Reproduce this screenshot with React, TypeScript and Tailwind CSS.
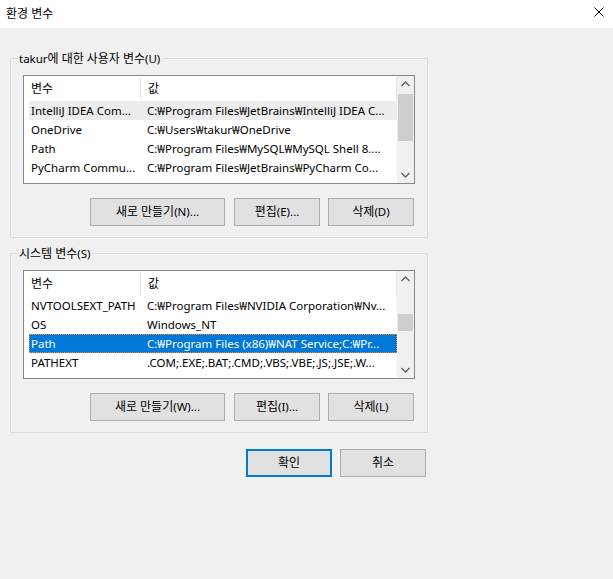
import React from "react";

type Row = { name: string; value: string; state?: "hover" | "selected" };

const userRows: Row[] = [
  { name: "IntelliJ IDEA Com...", value: "C:₩Program Files₩JetBrains₩IntelliJ IDEA C...", state: "hover" },
  { name: "OneDrive", value: "C:₩Users₩takur₩OneDrive" },
  { name: "Path", value: "C:₩Program Files₩MySQL₩MySQL Shell 8...." },
  { name: "PyCharm Commu...", value: "C:₩Program Files₩JetBrains₩PyCharm Co..." },
];

const systemRows: Row[] = [
  { name: "NVTOOLSEXT_PATH", value: "C:₩Program Files₩NVIDIA Corporation₩Nv..." },
  { name: "OS", value: "Windows_NT" },
  { name: "Path", value: "C:₩Program Files (x86)₩NAT Service;C:₩Pr...", state: "selected" },
  { name: "PATHEXT", value: ".COM;.EXE;.BAT;.CMD;.VBS;.VBE;.JS;.JSE;.W..." },
];

function T({ s }: { s: string }) {
  const parts = s.split(/([\uAC00-\uD7A3\u3131-\u318E]+)/);
  return (
    <>
      {parts.map((p, i) =>
        /[\uAC00-\uD7A3\u3131-\u318E]/.test(p) ? (
          <span key={i} className="text-[12px]">
            {p}
          </span>
        ) : (
          <React.Fragment key={i}>{p}</React.Fragment>
        )
      )}
    </>
  );
}

function Chevron({ dir }: { dir: "up" | "down" }) {
  return (
    <svg width="17" height="17" viewBox="0 0 17 17" className="block shrink-0">
      <path
        d={dir === "up" ? "M4.5 10 L8.5 6 L12.5 10" : "M4.5 7 L8.5 11 L12.5 7"}
        fill="none"
        stroke="#606060"
        strokeWidth="1.4"
      />
    </svg>
  );
}

function RowView({ row }: { row: Row }) {
  const base = "ml-[5px] flex h-[19px] shrink-0";
  const cls =
    row.state === "selected"
      ? base + " bg-[#0078d7] text-white outline outline-1 outline-dotted outline-[#ff8728] -outline-offset-1"
      : row.state === "hover"
      ? base + " bg-[#ececec] text-black"
      : base + " text-black";
  return (
    <div className={cls}>
      <div className="w-[111px] shrink-0 pl-[2px] overflow-hidden whitespace-nowrap leading-[19px]">{row.name}</div>
      <div className="flex-1 pl-[7px] overflow-hidden whitespace-nowrap leading-[19px]">{row.value}</div>
    </div>
  );
}

function ListView({ rows, thumbTop, thumbHeight }: { rows: Row[]; thumbTop: number; thumbHeight: number }) {
  return (
    <div className="flex w-[392px] h-[109px] border border-[#828790] bg-white">
      <div className="flex-1 flex flex-col overflow-hidden">
        <div className="flex h-[25px] shrink-0">
          <div className="w-[117px] shrink-0 pl-[7px] flex items-center">
            <span className="flex-1 text-[12px]">변수</span>
            <span className="w-px h-[23px] bg-[#e5e5e5]" />
          </div>
          <div className="flex-1 pl-[7px] flex items-center">
            <span className="flex-1 text-[12px]">값</span>
            <span className="w-px h-[23px] bg-[#e5e5e5]" />
          </div>
        </div>
        {rows.map((r, i) => (
          <RowView key={i} row={r} />
        ))}
      </div>
      <div className="w-[17px] shrink-0 flex flex-col bg-[#f0f0f0]">
        <Chevron dir="up" />
        <div className="flex-1 flex flex-col">
          <div className="mx-[1px] bg-[#cdcdcd]" style={{ marginTop: thumbTop, height: thumbHeight }} />
        </div>
        <Chevron dir="down" />
      </div>
    </div>
  );
}

function Btn({ label, w, primary }: { label: string; w: string; primary?: boolean }) {
  const cls = primary
    ? "h-[28px] border-2 border-[#0078d7] bg-[#e1e1e1] flex items-center justify-center text-black whitespace-nowrap " + w
    : "h-[28px] border border-[#adadad] bg-[#e1e1e1] flex items-center justify-center text-black whitespace-nowrap " + w;
  return (
    <div className={cls}>
      <span>
        <T s={label} />
      </span>
    </div>
  );
}

function Group({
  title,
  rows,
  thumbTop,
  thumbHeight,
  btns,
  className,
}: {
  title: string;
  rows: Row[];
  thumbTop: number;
  thumbHeight: number;
  btns: [string, string, string];
  className: string;
}) {
  return (
    <fieldset className={"w-[418px] border border-[#dcdcdc] p-0 " + className}>
      <legend className="ml-[6px] px-[2px] leading-[17px] h-[17px] whitespace-nowrap">
        <T s={title} />
      </legend>
      <div className="pl-[12px] pt-[8px] pb-[11px]">
        <ListView rows={rows} thumbTop={thumbTop} thumbHeight={thumbHeight} />
        <div className="mt-[14px] w-[392px] flex justify-end">
          <Btn w="w-[135px]" label={btns[0]} />
          <div className="w-[9px]" />
          <Btn w="w-[86px]" label={btns[1]} />
          <div className="w-[8px]" />
          <Btn w="w-[86px]" label={btns[2]} />
          <div className="w-[1px]" />
        </div>
      </div>
    </fieldset>
  );
}

export default function App() {
  return (
    <div className="w-[613px] h-[579px] overflow-hidden bg-[#f0f0f0] text-black text-[11.5px] font-['Noto_Sans','Noto_Sans_CJK_KR',sans-serif] flex flex-col">
      <div className="h-[28px] shrink-0 bg-white flex items-center justify-between pl-[6px] pr-[9px]">
        <span className="text-[12px] leading-[16px] -mt-[1px]">환경 변수</span>
        <svg width="10" height="10" viewBox="0 0 10 10" className="block -mt-[4px]">
          <path d="M0.5 0.5 L9.5 9.5 M9.5 0.5 L0.5 9.5" stroke="#000" strokeWidth="1" fill="none" />
        </svg>
      </div>
      <div className="pl-[10px] flex flex-col">
        <Group
          className="mt-[22px]"
          title="takur에 대한 사용자 변수(U)"
          rows={userRows}
          thumbTop={1}
          thumbHeight={47}
          btns={["새로 만들기(N)...", "편집(E)...", "삭제(D)"]}
        />
        <Group
          className="mt-[7px]"
          title="시스템 변수(S)"
          rows={systemRows}
          thumbTop={26}
          thumbHeight={17}
          btns={["새로 만들기(W)...", "편집(I)...", "삭제(L)"]}
        />
        <div className="mt-[16px] w-[418px] flex justify-end pr-[2px]">
          <Btn w="w-[86px]" primary label="확인" />
          <div className="w-[8px]" />
          <Btn w="w-[86px]" label="취소" />
        </div>
      </div>
    </div>
  );
}
